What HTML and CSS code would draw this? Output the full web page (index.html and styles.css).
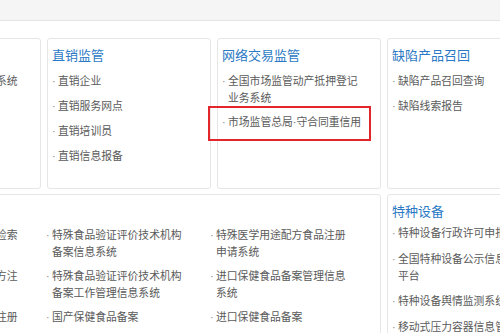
FILE: index.html
```html
<!DOCTYPE html>
<html lang="zh-CN">
<head>
<meta charset="utf-8">
<title>监管业务系统</title>
<link rel="stylesheet" href="styles.css">
</head>
<body>
<div class="topbar"></div>
<div class="board">
  <div class="row">
    <div class="card">
      <h3 class="card-title">信用监管</h3>
      <ul class="items">
        <li><span class="dot">·</span>国家企业信用信息公示系统</li>
        <li><span class="dot">·</span>企业名称申报</li>
        <li><span class="dot">·</span>经营异常名录</li>
      </ul>
    </div>
    <div class="card">
      <h3 class="card-title">直销监管</h3>
      <ul class="items">
        <li><span class="dot">·</span>直销企业</li>
        <li><span class="dot">·</span>直销服务网点</li>
        <li><span class="dot">·</span>直销培训员</li>
        <li><span class="dot">·</span>直销信息报备</li>
      </ul>
    </div>
    <div class="card">
      <h3 class="card-title">网络交易监管</h3>
      <ul class="items">
        <li><span class="dot">·</span>全国市场监管动产抵押登记业务系统</li>
        <li><span class="dot">·</span>市场监管总局<span class="mid">·</span>守合同重信用</li>
      </ul>
    </div>
    <div class="card">
      <h3 class="card-title">缺陷产品召回</h3>
      <ul class="items">
        <li><span class="dot">·</span>缺陷产品召回查询</li>
        <li><span class="dot">·</span>缺陷线索报告</li>
      </ul>
    </div>
  </div>
  <div class="row lower">
    <div class="card wide">
      <h3 class="card-title">特殊食品</h3>
      <ul class="items cols">
        <li><span class="dot">·</span>保健食品产品注册信息检索系统</li>
        <li><span class="dot">·</span>特殊食品验证评价技术机构备案信息系统</li>
        <li><span class="dot">·</span>特殊医学用途配方食品注册申请系统</li>
        <li><span class="dot">·</span>婴幼儿配方乳粉产品配方注册</li>
        <li><span class="dot">·</span>特殊食品验证评价技术机构备案工作管理信息系统</li>
        <li><span class="dot">·</span>进口保健食品备案管理信息系统</li>
        <li><span class="dot">·</span>国产保健食品产品配方注册</li>
        <li><span class="dot">·</span>国产保健食品备案</li>
        <li><span class="dot">·</span>进口保健食品备案</li>
      </ul>
    </div>
    <div class="card">
      <h3 class="card-title">特种设备</h3>
      <ul class="items">
        <li><span class="dot">·</span>特种设备行政许可申报系统</li>
        <li><span class="dot">·</span>全国特种设备公示信息查询平台</li>
        <li><span class="dot">·</span>特种设备舆情监测系统</li>
        <li><span class="dot">·</span>移动式压力容器信息管理系统</li>
      </ul>
    </div>
  </div>
</div>
<div class="highlight"></div>
</body>
</html>
```

FILE: styles.css
```css
* { box-sizing: border-box; }
html, body {
  margin: 0;
  padding: 0;
}
body {
  width: 500px;
  height: 333px;
  overflow: hidden;
  background: #fff;
  font-family: "Noto Sans CJK SC", "Noto Sans", sans-serif;
  color: #5a5a5a;
  position: relative;
}
.topbar {
  height: 21px;
  background: #f5f5f5;
  border-bottom: 1px solid #e4e4e4;
}
.board {
  margin-left: -123px;
  padding-top: 17px;
  display: flex;
  flex-direction: column;
  gap: 5px;
}
.row {
  display: flex;
  gap: 6px;
  align-items: flex-start;
}
.card {
  flex: none;
  width: 164px;
  height: 151px;
  border: 1px solid #e6e6e6;
  border-radius: 3px;
  padding: 7px 4px 0 4px;
  background: #fff;
}
.card.wide {
  width: 504px;
  height: 160px;
}
.card-title {
  margin: 0 0 8px 0;
  font-size: 13px;
  line-height: 18px;
  font-weight: normal;
  color: #2b79c4;
}
.lower .card-title {
  margin-bottom: 4px;
}
.items {
  list-style: none;
  margin: 0;
  padding: 0;
  font-size: 10.8px;
  line-height: 16px;
}
.items li {
  margin-bottom: 8px;
  padding-left: 6px;
  padding-right: 14px;
  text-indent: -6px;
}
.lower .items li {
  margin-bottom: 9px;
}
.dot {
  display: inline-block;
  width: 6px;
  text-indent: 0;
  color: #888;
  font-family: "Liberation Sans", sans-serif;
  text-align: left;
}
.mid {
  font-family: "Liberation Sans", sans-serif;
}
.items.cols {
  display: grid;
  grid-template-columns: repeat(3, 164px);
  margin-top: 6px;
}
.items.cols li {
  padding-right: 24px;
  margin-bottom: 8px;
}
.highlight {
  position: absolute;
  left: 208px;
  top: 106px;
  width: 163px;
  height: 35px;
  border: 2px solid #e3262b;
}
```
